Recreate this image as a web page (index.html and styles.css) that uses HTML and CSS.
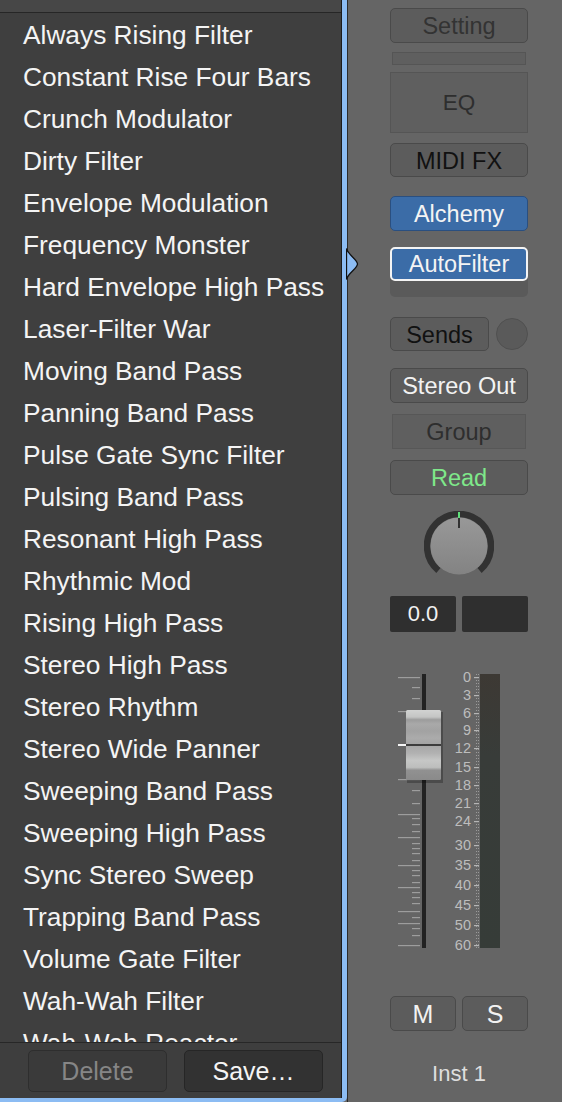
FILE: index.html
```html
<!DOCTYPE html>
<html lang="en">

<head>
    <meta charset="UTF-8" />
    <meta name="viewport" content="width=device-width, initial-scale=1.0" />
    <link rel="stylesheet" href="styles.css">
    <title>AutoFilter Presets</title>
</head>

<body>

    <div class="window">

        <!-- preset popup on the left -->
        <div class="popup">
            <div class="presets">
                <div class="presets-top"></div>
                <ul class="preset-list">
                    <li>Always Rising Filter</li>
                    <li>Constant Rise Four Bars</li>
                    <li>Crunch Modulator</li>
                    <li>Dirty Filter</li>
                    <li>Envelope Modulation</li>
                    <li>Frequency Monster</li>
                    <li>Hard Envelope High Pass</li>
                    <li>Laser-Filter War</li>
                    <li>Moving Band Pass</li>
                    <li>Panning Band Pass</li>
                    <li>Pulse Gate Sync Filter</li>
                    <li>Pulsing Band Pass</li>
                    <li>Resonant High Pass</li>
                    <li>Rhythmic Mod</li>
                    <li>Rising High Pass</li>
                    <li>Stereo High Pass</li>
                    <li>Stereo Rhythm</li>
                    <li>Stereo Wide Panner</li>
                    <li>Sweeping Band Pass</li>
                    <li>Sweeping High Pass</li>
                    <li>Sync Stereo Sweep</li>
                    <li>Trapping Band Pass</li>
                    <li>Volume Gate Filter</li>
                    <li>Wah-Wah Filter</li>
                    <li>Wah-Wah Reactor</li>
                </ul>
                <div class="presets-footer">
                    <button class="footer-btn disabled">Delete</button>
                    <button class="footer-btn">Save…</button>
                </div>
            </div>
        </div>

        <!-- arrow that points at the AutoFilter slot -->
        <svg class="pointer" width="13" height="32" viewBox="0 0 13 32">
            <path d="M0.5 0.5 C2 7 11.5 11.5 11.5 16 C11.5 20.5 2 25 0.5 31.5 Z" fill="#8cbcf3" stroke="#111" stroke-width="1.3" />
        </svg>

        <!-- channel strip -->
        <div class="strip">
            <div class="ch-btn setting">Setting</div>
            <div class="gain-bar"></div>
            <div class="eq">EQ</div>
            <div class="ch-btn midi">MIDI FX</div>
            <div class="ch-btn blue alchemy">Alchemy</div>
            <div class="insert-slot">
                <div class="ch-btn blue selected">AutoFilter</div>
            </div>
            <div class="sends-row">
                <div class="ch-btn sends">Sends</div>
                <div class="sends-dot"></div>
            </div>
            <div class="ch-btn output">Stereo Out</div>
            <div class="group">Group</div>
            <div class="ch-btn read">Read</div>

            <div class="knob">
                <svg width="70" height="70" viewBox="0 0 70 70">
                    <defs>
                        <linearGradient id="knobFill" x1="0" y1="0" x2="0" y2="1">
                            <stop offset="0" stop-color="#989898" />
                            <stop offset="1" stop-color="#838383" />
                        </linearGradient>
                    </defs>
                    <path d="M14.43 59.51 A32 32 0 1 1 55.57 59.51" fill="none" stroke="#323232" stroke-width="6.5" />
                    <circle cx="35" cy="35" r="28.5" fill="url(#knobFill)" />
                    <line x1="35" y1="1" x2="35" y2="7" stroke="#5fe07a" stroke-width="2" />
                    <line x1="35" y1="7" x2="35" y2="17" stroke="#111" stroke-width="1.5" />
                </svg>
            </div>

            <div class="values">
                <div class="value-box">0.0</div>
                <div class="value-box"></div>
            </div>

            <svg class="fader" width="138" height="285" viewBox="0 0 138 285">
                <defs>
                    <linearGradient id="capFill" x1="0" y1="0" x2="0" y2="1">
                        <stop offset="0" stop-color="#d2d3d2" />
                        <stop offset="0.1" stop-color="#c4c5c4" />
                        <stop offset="0.14" stop-color="#9c9c9c" />
                        <stop offset="0.2" stop-color="#a9a9a9" />
                        <stop offset="0.3" stop-color="#a2a2a2" />
                        <stop offset="0.4" stop-color="#ababab" />
                        <stop offset="0.48" stop-color="#a4a4a4" />
                        <stop offset="0.48" stop-color="#3c3c3c" />
                        <stop offset="0.51" stop-color="#3c3c3c" />
                        <stop offset="0.51" stop-color="#a7a7a7" />
                        <stop offset="0.62" stop-color="#b2b2b2" />
                        <stop offset="0.72" stop-color="#c6c7c6" />
                        <stop offset="0.82" stop-color="#bdbebd" />
                        <stop offset="0.86" stop-color="#919191" />
                        <stop offset="1" stop-color="#8a8a8a" />
                    </linearGradient>
                    <linearGradient id="meterFill" x1="0" y1="0" x2="0" y2="1">
                        <stop offset="0" stop-color="#3d3934" />
                        <stop offset="0.3" stop-color="#383c39" />
                        <stop offset="1" stop-color="#363c38" />
                    </linearGradient>
                    <pattern id="fineTicks" width="4" height="3" patternUnits="userSpaceOnUse" y="6">
                        <rect x="0" y="0" width="3" height="1" fill="#9a9a9a" />
                    </pattern>
                </defs>

                <!-- fader scale -->
                <g fill="#9d9d9d">
                    <rect x="8" y="9" width="22" height="1.2" />
                    <rect x="8" y="43" width="22" height="1.2" />
                    <rect x="8" y="111" width="22" height="1.2" />
                    <rect x="8" y="146" width="22" height="1.2" />
                    <rect x="8" y="169" width="22" height="1.2" />
                    <rect x="8" y="197" width="22" height="1.2" />
                    <rect x="8" y="219" width="22" height="1.2" />
                    <rect x="8" y="243" width="22" height="1.2" />
                    <rect x="8" y="255" width="22" height="1.2" />
                    <rect x="8" y="277" width="22" height="1.2" />
                    <rect x="22" y="19" width="8" height="1.2" />
                    <rect x="22" y="30" width="8" height="1.2" />
                    <rect x="22" y="54" width="8" height="1.2" />
                    <rect x="22" y="65" width="8" height="1.2" />
                    <rect x="22" y="89" width="8" height="1.2" />
                    <rect x="22" y="100" width="8" height="1.2" />
                    <rect x="22" y="122" width="8" height="1.2" />
                    <rect x="22" y="135" width="8" height="1.2" />
                    <rect x="22" y="150" width="8" height="1.2" />
                    <rect x="22" y="156" width="8" height="1.2" />
                    <rect x="22" y="163" width="8" height="1.2" />
                    <rect x="22" y="175" width="8" height="1.2" />
                    <rect x="22" y="180" width="8" height="1.2" />
                    <rect x="22" y="185" width="8" height="1.2" />
                    <rect x="22" y="192" width="8" height="1.2" />
                    <rect x="22" y="202" width="8" height="1.2" />
                    <rect x="22" y="207" width="8" height="1.2" />
                    <rect x="22" y="214" width="8" height="1.2" />
                    <rect x="22" y="224" width="8" height="1.2" />
                    <rect x="22" y="229" width="8" height="1.2" />
                    <rect x="22" y="235" width="8" height="1.2" />
                    <rect x="22" y="249" width="8" height="1.2" />
                    <rect x="22" y="260" width="8" height="1.2" />
                    <rect x="22" y="267" width="8" height="1.2" />
                </g>

                <!-- fader track and cap -->
                <rect x="32" y="6" width="4" height="274" fill="#222" />
                <rect x="17" y="44" width="36" height="71" fill="#000" opacity="0.25" />
                <rect x="16" y="42" width="35" height="70" rx="1.5" fill="url(#capFill)" />
                <rect x="8" y="76" width="8" height="2" fill="#f4f4f4" />

                <!-- meter scale -->
                <g class="scale-text" text-anchor="end">
                    <text x="81" y="14">0</text>
                    <text x="81" y="32">3</text>
                    <text x="81" y="50">6</text>
                    <text x="81" y="67">9</text>
                    <text x="81" y="85">12</text>
                    <text x="81" y="104">15</text>
                    <text x="81" y="122">18</text>
                    <text x="81" y="140">21</text>
                    <text x="81" y="158">24</text>
                    <text x="81" y="182">30</text>
                    <text x="81" y="202">35</text>
                    <text x="81" y="222">40</text>
                    <text x="81" y="242">45</text>
                    <text x="81" y="262">50</text>
                    <text x="81" y="282">60</text>
                </g>
                <rect x="86" y="6" width="3" height="274" fill="url(#fineTicks)" />
                <g fill="#b5b5b5">
                    <rect x="84" y="9" width="5" height="1.2" />
                    <rect x="84" y="27" width="5" height="1.2" />
                    <rect x="84" y="45" width="5" height="1.2" />
                    <rect x="84" y="62" width="5" height="1.2" />
                    <rect x="84" y="80" width="5" height="1.2" />
                    <rect x="84" y="99" width="5" height="1.2" />
                    <rect x="84" y="117" width="5" height="1.2" />
                    <rect x="84" y="135" width="5" height="1.2" />
                    <rect x="84" y="153" width="5" height="1.2" />
                    <rect x="84" y="177" width="5" height="1.2" />
                    <rect x="84" y="197" width="5" height="1.2" />
                    <rect x="84" y="217" width="5" height="1.2" />
                    <rect x="84" y="237" width="5" height="1.2" />
                    <rect x="84" y="257" width="5" height="1.2" />
                    <rect x="84" y="277" width="5" height="1.2" />
                </g>
                <rect x="90" y="6" width="20" height="274" fill="url(#meterFill)" />
            </svg>

            <div class="mute-solo">
                <div class="ch-btn ms">M</div>
                <div class="ch-btn ms">S</div>
            </div>
            <div class="track-name">Inst 1</div>
        </div>
    </div>

</body>

</html>
```

FILE: styles.css
```css
:root {
    /* popup highlight and strip colours */
    --popup-blue: #8cbcf3;
    --strip-bg: #656565;
    --btn-bg: #5c5c5c;
    --btn-border: #4a4a4a;
    --slot-blue: #3b6ca7;
}

* {
    box-sizing: border-box;
}

body {
    margin: 0;
    background-color: var(--strip-bg);
    font-family: 'Liberation Sans', Arial, sans-serif;
    overflow: hidden;
}

.window {
    display: flex;
    position: relative;
    /* so the pointer arrow can sit over the strip */
    width: 562px;
    height: 1102px;
}

/* ---------- preset popup ---------- */

.popup {
    width: 347px;
    height: 1102px;
    border-right: 5px solid var(--popup-blue);
    border-bottom: 4px solid var(--popup-blue);
    border-bottom-right-radius: 5px;
    flex-shrink: 0;
}

.presets {
    display: flex;
    flex-direction: column;
    width: 342px;
    height: 100%;
    background-color: #3f3f3f;
    border-right: 1px solid #1c1c1c;
}

.presets-top {
    height: 13px;
    background-color: #474747;
    border-bottom: 1px solid #262626;
}

.preset-list {
    list-style: none;
    margin: 0;
    padding: 1px 0 0 0;
    flex: 1;
    overflow: hidden;
}

.preset-list li {
    height: 42px;
    line-height: 42px;
    padding-left: 23px;
    font-size: 26.3px;
    color: #f4f4f4;
    white-space: nowrap;
}

.presets-footer {
    display: flex;
    gap: 17px;
    height: 56px;
    padding: 7px 0 0 28px;
    border-top: 1px solid #272727;
    background-color: #3e3e3e;
}

.footer-btn {
    width: 139px;
    height: 42px;
    border-radius: 5px;
    border: 1px solid #262626;
    background-color: #323232;
    color: #f5f5f5;
    font-family: inherit;
    font-size: 25px;
    padding: 0;
}

.footer-btn.disabled {
    background-color: #3a3a3a;
    border-color: #2e2e2e;
    color: #868686;
}

.pointer {
    position: absolute;
    left: 346px;
    top: 248px;
}

/* ---------- channel strip ---------- */

.strip {
    display: flex;
    flex-direction: column;
    width: 215px;
    padding-left: 42px;
    border-left: 1px solid #2b2b2b;
}

.strip > * {
    width: 138px;
    flex-shrink: 0;
}

.ch-btn {
    height: 35px;
    padding-top: 2px;
    line-height: 31px;
    text-align: center;
    font-size: 23.5px;
    background-color: var(--btn-bg);
    border: 1px solid var(--btn-border);
    border-radius: 5px;
    color: #f2f2f2;
}

.setting {
    margin-top: 8px;
    color: #333;
}

.gain-bar {
    width: 134px;
    height: 13px;
    margin: 9px 2px 0;
    background-color: #5f5f5f;
    border: 1px solid #555;
}

.eq {
    height: 61px;
    margin-top: 7px;
    line-height: 59px;
    text-align: center;
    font-size: 22.5px;
    color: #2e2e2e;
    background-color: #5f5f5f;
    border: 1px solid #555;
}

.midi {
    height: 34px;
    line-height: 30px;
    margin-top: 10px;
    color: #111;
}

.blue {
    background-color: var(--slot-blue);
    border-color: #2a4f80;
    color: #f4f4f4;
}

.alchemy {
    margin-top: 19px;
}

.insert-slot {
    height: 50px;
    margin-top: 16px;
    background-color: #5a5a5a;
    border-radius: 5px;
}

.selected {
    height: 34px;
    padding-top: 1px;
    line-height: 29px;
    border: 2px solid #f4f4f4;
}

.sends-row {
    display: flex;
    justify-content: space-between;
    align-items: center;
    height: 34px;
    margin-top: 20px;
}

.sends {
    width: 99px;
    height: 34px;
    line-height: 30px;
    color: #111;
}

.sends-dot {
    width: 32px;
    height: 32px;
    border-radius: 50%;
    background-color: #5a5a5a;
    border: 1px solid #505050;
}

.output {
    margin-top: 17px;
}

.group {
    width: 134px;
    height: 35px;
    margin: 11px 2px 0;
    padding-top: 2px;
    line-height: 31px;
    text-align: center;
    font-size: 23.5px;
    color: #2e2e2e;
    background-color: #5f5f5f;
    border: 1px solid #575757;
}

.read {
    margin-top: 11px;
    color: #7fe88a;
}

.knob {
    display: flex;
    justify-content: center;
    height: 70px;
    margin-top: 16px;
}

.values {
    display: flex;
    gap: 6px;
    height: 36px;
    margin-top: 15px;
}

.value-box {
    width: 66px;
    height: 36px;
    line-height: 36px;
    text-align: center;
    font-size: 22px;
    color: #f2f2f2;
    background-color: #2f2f2f;
    border-radius: 2px;
}

.fader {
    display: block;
    margin-top: 36px;
}

.scale-text {
    font-family: 'Liberation Sans', Arial, sans-serif;
    font-size: 14.5px;
    fill: #bdbdbd;
}

.mute-solo {
    display: flex;
    gap: 6px;
    margin-top: 43px;
}

.ms {
    width: 66px;
    font-size: 25px;
}

.track-name {
    margin-top: 31px;
    text-align: center;
    font-size: 22px;
    line-height: 24px;
    color: #dedede;
}
```
